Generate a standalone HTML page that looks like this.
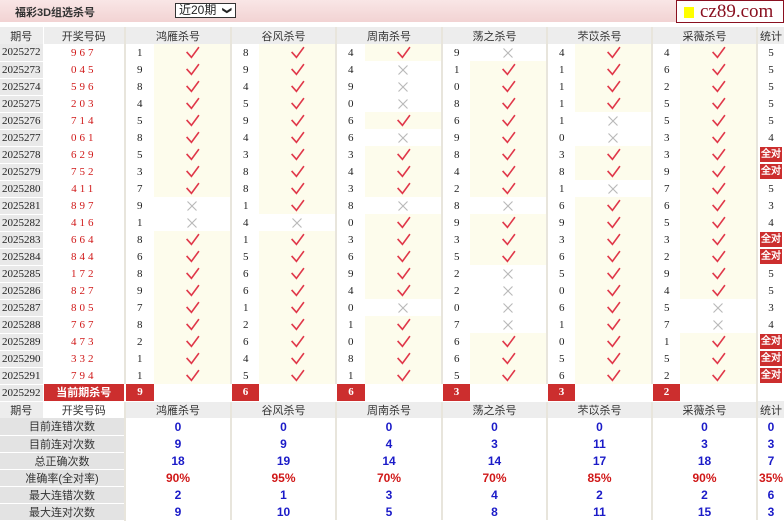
<!DOCTYPE html>
<html><head><meta charset="utf-8"><style>
*{margin:0;padding:0;box-sizing:border-box}
body{width:784px;height:520px;overflow:hidden;background:#fff;font-family:"Liberation Sans","Noto Sans CJK SC",sans-serif;font-size:11px;color:#222}
.bar{position:absolute;left:0;top:0;width:784px;height:22px;background:linear-gradient(#f9e6e6,#f2d3d3)}
.title{position:absolute;left:15px;top:4px;font-size:11px;font-weight:bold;color:#333}
.sel{position:absolute;left:175px;top:3px;width:61px;height:15px;border:1px solid #333;background:#fff;font-size:12px;line-height:13px;padding-left:3px;color:#222}
.sel b{position:absolute;right:4px;top:0;font-size:9px;transform:rotate(90deg)}
.logo{position:absolute;left:676px;top:0;width:108px;height:23px;border:1px solid #8a1020;background:#fff;font-family:"Liberation Serif",serif;font-size:19px;color:#8a1020;line-height:21px;padding-left:23px;letter-spacing:0px;white-space:nowrap;overflow:hidden}
.logo i{position:absolute;left:7px;top:6px;width:10px;height:11px;background:#ffff00}
table{position:absolute;left:0;top:27px;border-collapse:collapse;table-layout:fixed;width:784px}
td{height:17px;padding:0;text-align:center;vertical-align:middle;white-space:nowrap;overflow:hidden}
td.p{background:#e9e9e9;border-bottom:1px solid #fff;border-right:1px solid #fff;font-family:"Liberation Serif",serif;font-size:11px;text-align:left;padding-left:2px}
tr.h td{background:#ededed;color:#333;font-size:11px}
td.k{color:#d01818;font-family:"Liberation Serif",serif;letter-spacing:3px;font-size:11px}
td.n{border-left:2px solid #e8e5dc;font-family:"Liberation Serif",serif;font-size:11px;text-align:left;padding-left:11px}
td.y{background:#fdfcec}
td.s{border-left:2px solid #e8e5dc;font-family:"Liberation Serif",serif}
.q{display:inline-block;background:#cc2e2e;color:#fff;font-weight:bold;font-size:10px;padding:0 1px;line-height:15px}
td.cr{background:#cc2e2e;color:#fff;font-weight:bold;border-left:2px solid #fff;border-bottom:1px solid #fff;font-family:"Liberation Serif",serif}
td.lab{background:#e3e3e3;border-bottom:1px solid #fff;color:#333}
td.b{color:#1b1bc8;font-weight:bold;font-size:12px;border-left:2px solid #e8e5dc}
td.r{color:#d01818;font-weight:bold;font-size:12px;border-left:2px solid #e8e5dc}
svg{display:block;margin:0 auto}
</style></head><body>
<div class="bar"></div>
<div class="title">福彩3D组选杀号</div>
<div class="sel">近20期<b>&#10095;</b></div>
<div class="logo"><i></i>cz89.com</div>
<svg width="0" height="0" style="position:absolute"><defs>
<symbol id="c" viewBox="0 0 14 12"><path d="M1.5 5.5L6 10.5L13 1" fill="none" stroke="#e0384a" stroke-width="1.5"/></symbol>
<symbol id="x" viewBox="0 0 12 12"><path d="M1.5 1.5L10.5 10.5M10.5 1.5L1.5 10.5" fill="none" stroke="#b8b8b8" stroke-width="1.1"/></symbol>
</defs></svg>
<table>
<colgroup><col style="width:43px"><col style="width:82px">
<col style="width:29px"><col style="width:77px"><col style="width:28px"><col style="width:77px"><col style="width:29px"><col style="width:77px"><col style="width:28px"><col style="width:77px"><col style="width:28px"><col style="width:77px"><col style="width:28px"><col style="width:77px"><col style="width:27px"></colgroup>
<tr class="h"><td style="border-right:1px solid #fff">期号</td><td>开奖号码</td><td colspan="2" class="s" style="font-family:inherit">鸿雁杀号</td><td colspan="2" class="s" style="font-family:inherit">谷风杀号</td><td colspan="2" class="s" style="font-family:inherit">周南杀号</td><td colspan="2" class="s" style="font-family:inherit">荡之杀号</td><td colspan="2" class="s" style="font-family:inherit">芣苡杀号</td><td colspan="2" class="s" style="font-family:inherit">采薇杀号</td><td class="s" style="font-family:inherit">统计</td></tr>
<tr><td class="p">2025272</td><td class="k">967</td><td class="n">1</td><td class="y"><svg width="15" height="13"><use href="#c"/></svg></td><td class="n">8</td><td class="y"><svg width="15" height="13"><use href="#c"/></svg></td><td class="n">4</td><td class="y"><svg width="15" height="13"><use href="#c"/></svg></td><td class="n">9</td><td><svg width="12" height="12"><use href="#x"/></svg></td><td class="n">4</td><td class="y"><svg width="15" height="13"><use href="#c"/></svg></td><td class="n">4</td><td class="y"><svg width="15" height="13"><use href="#c"/></svg></td><td class="s">5</td></tr>
<tr><td class="p">2025273</td><td class="k">045</td><td class="n">9</td><td class="y"><svg width="15" height="13"><use href="#c"/></svg></td><td class="n">9</td><td class="y"><svg width="15" height="13"><use href="#c"/></svg></td><td class="n">4</td><td><svg width="12" height="12"><use href="#x"/></svg></td><td class="n">1</td><td class="y"><svg width="15" height="13"><use href="#c"/></svg></td><td class="n">1</td><td class="y"><svg width="15" height="13"><use href="#c"/></svg></td><td class="n">6</td><td class="y"><svg width="15" height="13"><use href="#c"/></svg></td><td class="s">5</td></tr>
<tr><td class="p">2025274</td><td class="k">596</td><td class="n">8</td><td class="y"><svg width="15" height="13"><use href="#c"/></svg></td><td class="n">4</td><td class="y"><svg width="15" height="13"><use href="#c"/></svg></td><td class="n">9</td><td><svg width="12" height="12"><use href="#x"/></svg></td><td class="n">0</td><td class="y"><svg width="15" height="13"><use href="#c"/></svg></td><td class="n">1</td><td class="y"><svg width="15" height="13"><use href="#c"/></svg></td><td class="n">2</td><td class="y"><svg width="15" height="13"><use href="#c"/></svg></td><td class="s">5</td></tr>
<tr><td class="p">2025275</td><td class="k">203</td><td class="n">4</td><td class="y"><svg width="15" height="13"><use href="#c"/></svg></td><td class="n">5</td><td class="y"><svg width="15" height="13"><use href="#c"/></svg></td><td class="n">0</td><td><svg width="12" height="12"><use href="#x"/></svg></td><td class="n">8</td><td class="y"><svg width="15" height="13"><use href="#c"/></svg></td><td class="n">1</td><td class="y"><svg width="15" height="13"><use href="#c"/></svg></td><td class="n">5</td><td class="y"><svg width="15" height="13"><use href="#c"/></svg></td><td class="s">5</td></tr>
<tr><td class="p">2025276</td><td class="k">714</td><td class="n">5</td><td class="y"><svg width="15" height="13"><use href="#c"/></svg></td><td class="n">9</td><td class="y"><svg width="15" height="13"><use href="#c"/></svg></td><td class="n">6</td><td class="y"><svg width="15" height="13"><use href="#c"/></svg></td><td class="n">6</td><td class="y"><svg width="15" height="13"><use href="#c"/></svg></td><td class="n">1</td><td><svg width="12" height="12"><use href="#x"/></svg></td><td class="n">5</td><td class="y"><svg width="15" height="13"><use href="#c"/></svg></td><td class="s">5</td></tr>
<tr><td class="p">2025277</td><td class="k">061</td><td class="n">8</td><td class="y"><svg width="15" height="13"><use href="#c"/></svg></td><td class="n">4</td><td class="y"><svg width="15" height="13"><use href="#c"/></svg></td><td class="n">6</td><td><svg width="12" height="12"><use href="#x"/></svg></td><td class="n">9</td><td class="y"><svg width="15" height="13"><use href="#c"/></svg></td><td class="n">0</td><td><svg width="12" height="12"><use href="#x"/></svg></td><td class="n">3</td><td class="y"><svg width="15" height="13"><use href="#c"/></svg></td><td class="s">4</td></tr>
<tr><td class="p">2025278</td><td class="k">629</td><td class="n">5</td><td class="y"><svg width="15" height="13"><use href="#c"/></svg></td><td class="n">3</td><td class="y"><svg width="15" height="13"><use href="#c"/></svg></td><td class="n">3</td><td class="y"><svg width="15" height="13"><use href="#c"/></svg></td><td class="n">8</td><td class="y"><svg width="15" height="13"><use href="#c"/></svg></td><td class="n">3</td><td class="y"><svg width="15" height="13"><use href="#c"/></svg></td><td class="n">3</td><td class="y"><svg width="15" height="13"><use href="#c"/></svg></td><td class="s"><span class="q">全对</span></td></tr>
<tr><td class="p">2025279</td><td class="k">752</td><td class="n">3</td><td class="y"><svg width="15" height="13"><use href="#c"/></svg></td><td class="n">8</td><td class="y"><svg width="15" height="13"><use href="#c"/></svg></td><td class="n">4</td><td class="y"><svg width="15" height="13"><use href="#c"/></svg></td><td class="n">4</td><td class="y"><svg width="15" height="13"><use href="#c"/></svg></td><td class="n">8</td><td class="y"><svg width="15" height="13"><use href="#c"/></svg></td><td class="n">9</td><td class="y"><svg width="15" height="13"><use href="#c"/></svg></td><td class="s"><span class="q">全对</span></td></tr>
<tr><td class="p">2025280</td><td class="k">411</td><td class="n">7</td><td class="y"><svg width="15" height="13"><use href="#c"/></svg></td><td class="n">8</td><td class="y"><svg width="15" height="13"><use href="#c"/></svg></td><td class="n">3</td><td class="y"><svg width="15" height="13"><use href="#c"/></svg></td><td class="n">2</td><td class="y"><svg width="15" height="13"><use href="#c"/></svg></td><td class="n">1</td><td><svg width="12" height="12"><use href="#x"/></svg></td><td class="n">7</td><td class="y"><svg width="15" height="13"><use href="#c"/></svg></td><td class="s">5</td></tr>
<tr><td class="p">2025281</td><td class="k">897</td><td class="n">9</td><td><svg width="12" height="12"><use href="#x"/></svg></td><td class="n">1</td><td class="y"><svg width="15" height="13"><use href="#c"/></svg></td><td class="n">8</td><td><svg width="12" height="12"><use href="#x"/></svg></td><td class="n">8</td><td><svg width="12" height="12"><use href="#x"/></svg></td><td class="n">6</td><td class="y"><svg width="15" height="13"><use href="#c"/></svg></td><td class="n">6</td><td class="y"><svg width="15" height="13"><use href="#c"/></svg></td><td class="s">3</td></tr>
<tr><td class="p">2025282</td><td class="k">416</td><td class="n">1</td><td><svg width="12" height="12"><use href="#x"/></svg></td><td class="n">4</td><td><svg width="12" height="12"><use href="#x"/></svg></td><td class="n">0</td><td class="y"><svg width="15" height="13"><use href="#c"/></svg></td><td class="n">9</td><td class="y"><svg width="15" height="13"><use href="#c"/></svg></td><td class="n">9</td><td class="y"><svg width="15" height="13"><use href="#c"/></svg></td><td class="n">5</td><td class="y"><svg width="15" height="13"><use href="#c"/></svg></td><td class="s">4</td></tr>
<tr><td class="p">2025283</td><td class="k">664</td><td class="n">8</td><td class="y"><svg width="15" height="13"><use href="#c"/></svg></td><td class="n">1</td><td class="y"><svg width="15" height="13"><use href="#c"/></svg></td><td class="n">3</td><td class="y"><svg width="15" height="13"><use href="#c"/></svg></td><td class="n">3</td><td class="y"><svg width="15" height="13"><use href="#c"/></svg></td><td class="n">3</td><td class="y"><svg width="15" height="13"><use href="#c"/></svg></td><td class="n">3</td><td class="y"><svg width="15" height="13"><use href="#c"/></svg></td><td class="s"><span class="q">全对</span></td></tr>
<tr><td class="p">2025284</td><td class="k">844</td><td class="n">6</td><td class="y"><svg width="15" height="13"><use href="#c"/></svg></td><td class="n">5</td><td class="y"><svg width="15" height="13"><use href="#c"/></svg></td><td class="n">6</td><td class="y"><svg width="15" height="13"><use href="#c"/></svg></td><td class="n">5</td><td class="y"><svg width="15" height="13"><use href="#c"/></svg></td><td class="n">6</td><td class="y"><svg width="15" height="13"><use href="#c"/></svg></td><td class="n">2</td><td class="y"><svg width="15" height="13"><use href="#c"/></svg></td><td class="s"><span class="q">全对</span></td></tr>
<tr><td class="p">2025285</td><td class="k">172</td><td class="n">8</td><td class="y"><svg width="15" height="13"><use href="#c"/></svg></td><td class="n">6</td><td class="y"><svg width="15" height="13"><use href="#c"/></svg></td><td class="n">9</td><td class="y"><svg width="15" height="13"><use href="#c"/></svg></td><td class="n">2</td><td><svg width="12" height="12"><use href="#x"/></svg></td><td class="n">5</td><td class="y"><svg width="15" height="13"><use href="#c"/></svg></td><td class="n">9</td><td class="y"><svg width="15" height="13"><use href="#c"/></svg></td><td class="s">5</td></tr>
<tr><td class="p">2025286</td><td class="k">827</td><td class="n">9</td><td class="y"><svg width="15" height="13"><use href="#c"/></svg></td><td class="n">6</td><td class="y"><svg width="15" height="13"><use href="#c"/></svg></td><td class="n">4</td><td class="y"><svg width="15" height="13"><use href="#c"/></svg></td><td class="n">2</td><td><svg width="12" height="12"><use href="#x"/></svg></td><td class="n">0</td><td class="y"><svg width="15" height="13"><use href="#c"/></svg></td><td class="n">4</td><td class="y"><svg width="15" height="13"><use href="#c"/></svg></td><td class="s">5</td></tr>
<tr><td class="p">2025287</td><td class="k">805</td><td class="n">7</td><td class="y"><svg width="15" height="13"><use href="#c"/></svg></td><td class="n">1</td><td class="y"><svg width="15" height="13"><use href="#c"/></svg></td><td class="n">0</td><td><svg width="12" height="12"><use href="#x"/></svg></td><td class="n">0</td><td><svg width="12" height="12"><use href="#x"/></svg></td><td class="n">6</td><td class="y"><svg width="15" height="13"><use href="#c"/></svg></td><td class="n">5</td><td><svg width="12" height="12"><use href="#x"/></svg></td><td class="s">3</td></tr>
<tr><td class="p">2025288</td><td class="k">767</td><td class="n">8</td><td class="y"><svg width="15" height="13"><use href="#c"/></svg></td><td class="n">2</td><td class="y"><svg width="15" height="13"><use href="#c"/></svg></td><td class="n">1</td><td class="y"><svg width="15" height="13"><use href="#c"/></svg></td><td class="n">7</td><td><svg width="12" height="12"><use href="#x"/></svg></td><td class="n">1</td><td class="y"><svg width="15" height="13"><use href="#c"/></svg></td><td class="n">7</td><td><svg width="12" height="12"><use href="#x"/></svg></td><td class="s">4</td></tr>
<tr><td class="p">2025289</td><td class="k">473</td><td class="n">2</td><td class="y"><svg width="15" height="13"><use href="#c"/></svg></td><td class="n">6</td><td class="y"><svg width="15" height="13"><use href="#c"/></svg></td><td class="n">0</td><td class="y"><svg width="15" height="13"><use href="#c"/></svg></td><td class="n">6</td><td class="y"><svg width="15" height="13"><use href="#c"/></svg></td><td class="n">0</td><td class="y"><svg width="15" height="13"><use href="#c"/></svg></td><td class="n">1</td><td class="y"><svg width="15" height="13"><use href="#c"/></svg></td><td class="s"><span class="q">全对</span></td></tr>
<tr><td class="p">2025290</td><td class="k">332</td><td class="n">1</td><td class="y"><svg width="15" height="13"><use href="#c"/></svg></td><td class="n">4</td><td class="y"><svg width="15" height="13"><use href="#c"/></svg></td><td class="n">8</td><td class="y"><svg width="15" height="13"><use href="#c"/></svg></td><td class="n">6</td><td class="y"><svg width="15" height="13"><use href="#c"/></svg></td><td class="n">5</td><td class="y"><svg width="15" height="13"><use href="#c"/></svg></td><td class="n">5</td><td class="y"><svg width="15" height="13"><use href="#c"/></svg></td><td class="s"><span class="q">全对</span></td></tr>
<tr><td class="p">2025291</td><td class="k">794</td><td class="n">1</td><td class="y"><svg width="15" height="13"><use href="#c"/></svg></td><td class="n">5</td><td class="y"><svg width="15" height="13"><use href="#c"/></svg></td><td class="n">1</td><td class="y"><svg width="15" height="13"><use href="#c"/></svg></td><td class="n">5</td><td class="y"><svg width="15" height="13"><use href="#c"/></svg></td><td class="n">6</td><td class="y"><svg width="15" height="13"><use href="#c"/></svg></td><td class="n">2</td><td class="y"><svg width="15" height="13"><use href="#c"/></svg></td><td class="s"><span class="q">全对</span></td></tr>
<tr><td class="p">2025292</td><td class="cr" style="font-family:inherit;font-size:11px;border-left:0">当前期杀号</td><td class="cr">9</td><td></td><td class="cr">6</td><td></td><td class="cr">6</td><td></td><td class="cr">3</td><td></td><td class="cr">3</td><td></td><td class="cr">2</td><td></td><td class="s"></td></tr>
<tr class="h"><td style="border-right:1px solid #fff">期号</td><td style="background:#fff">开奖号码</td><td colspan="2" class="s" style="font-family:inherit">鸿雁杀号</td><td colspan="2" class="s" style="font-family:inherit">谷风杀号</td><td colspan="2" class="s" style="font-family:inherit">周南杀号</td><td colspan="2" class="s" style="font-family:inherit">荡之杀号</td><td colspan="2" class="s" style="font-family:inherit">芣苡杀号</td><td colspan="2" class="s" style="font-family:inherit">采薇杀号</td><td class="s" style="font-family:inherit">统计</td></tr>
<tr><td colspan="2" class="lab">目前连错次数</td><td colspan="2" class="b">0</td><td colspan="2" class="b">0</td><td colspan="2" class="b">0</td><td colspan="2" class="b">0</td><td colspan="2" class="b">0</td><td colspan="2" class="b">0</td><td class="b">0</td></tr>
<tr><td colspan="2" class="lab">目前连对次数</td><td colspan="2" class="b">9</td><td colspan="2" class="b">9</td><td colspan="2" class="b">4</td><td colspan="2" class="b">3</td><td colspan="2" class="b">11</td><td colspan="2" class="b">3</td><td class="b">3</td></tr>
<tr><td colspan="2" class="lab">总正确次数</td><td colspan="2" class="b">18</td><td colspan="2" class="b">19</td><td colspan="2" class="b">14</td><td colspan="2" class="b">14</td><td colspan="2" class="b">17</td><td colspan="2" class="b">18</td><td class="b">7</td></tr>
<tr><td colspan="2" class="lab">准确率(全对率)</td><td colspan="2" class="r">90%</td><td colspan="2" class="r">95%</td><td colspan="2" class="r">70%</td><td colspan="2" class="r">70%</td><td colspan="2" class="r">85%</td><td colspan="2" class="r">90%</td><td class="r">35%</td></tr>
<tr><td colspan="2" class="lab">最大连错次数</td><td colspan="2" class="b">2</td><td colspan="2" class="b">1</td><td colspan="2" class="b">3</td><td colspan="2" class="b">4</td><td colspan="2" class="b">2</td><td colspan="2" class="b">2</td><td class="b">6</td></tr>
<tr><td colspan="2" class="lab">最大连对次数</td><td colspan="2" class="b">9</td><td colspan="2" class="b">10</td><td colspan="2" class="b">5</td><td colspan="2" class="b">8</td><td colspan="2" class="b">11</td><td colspan="2" class="b">15</td><td class="b">3</td></tr>
</table>
</body></html>
